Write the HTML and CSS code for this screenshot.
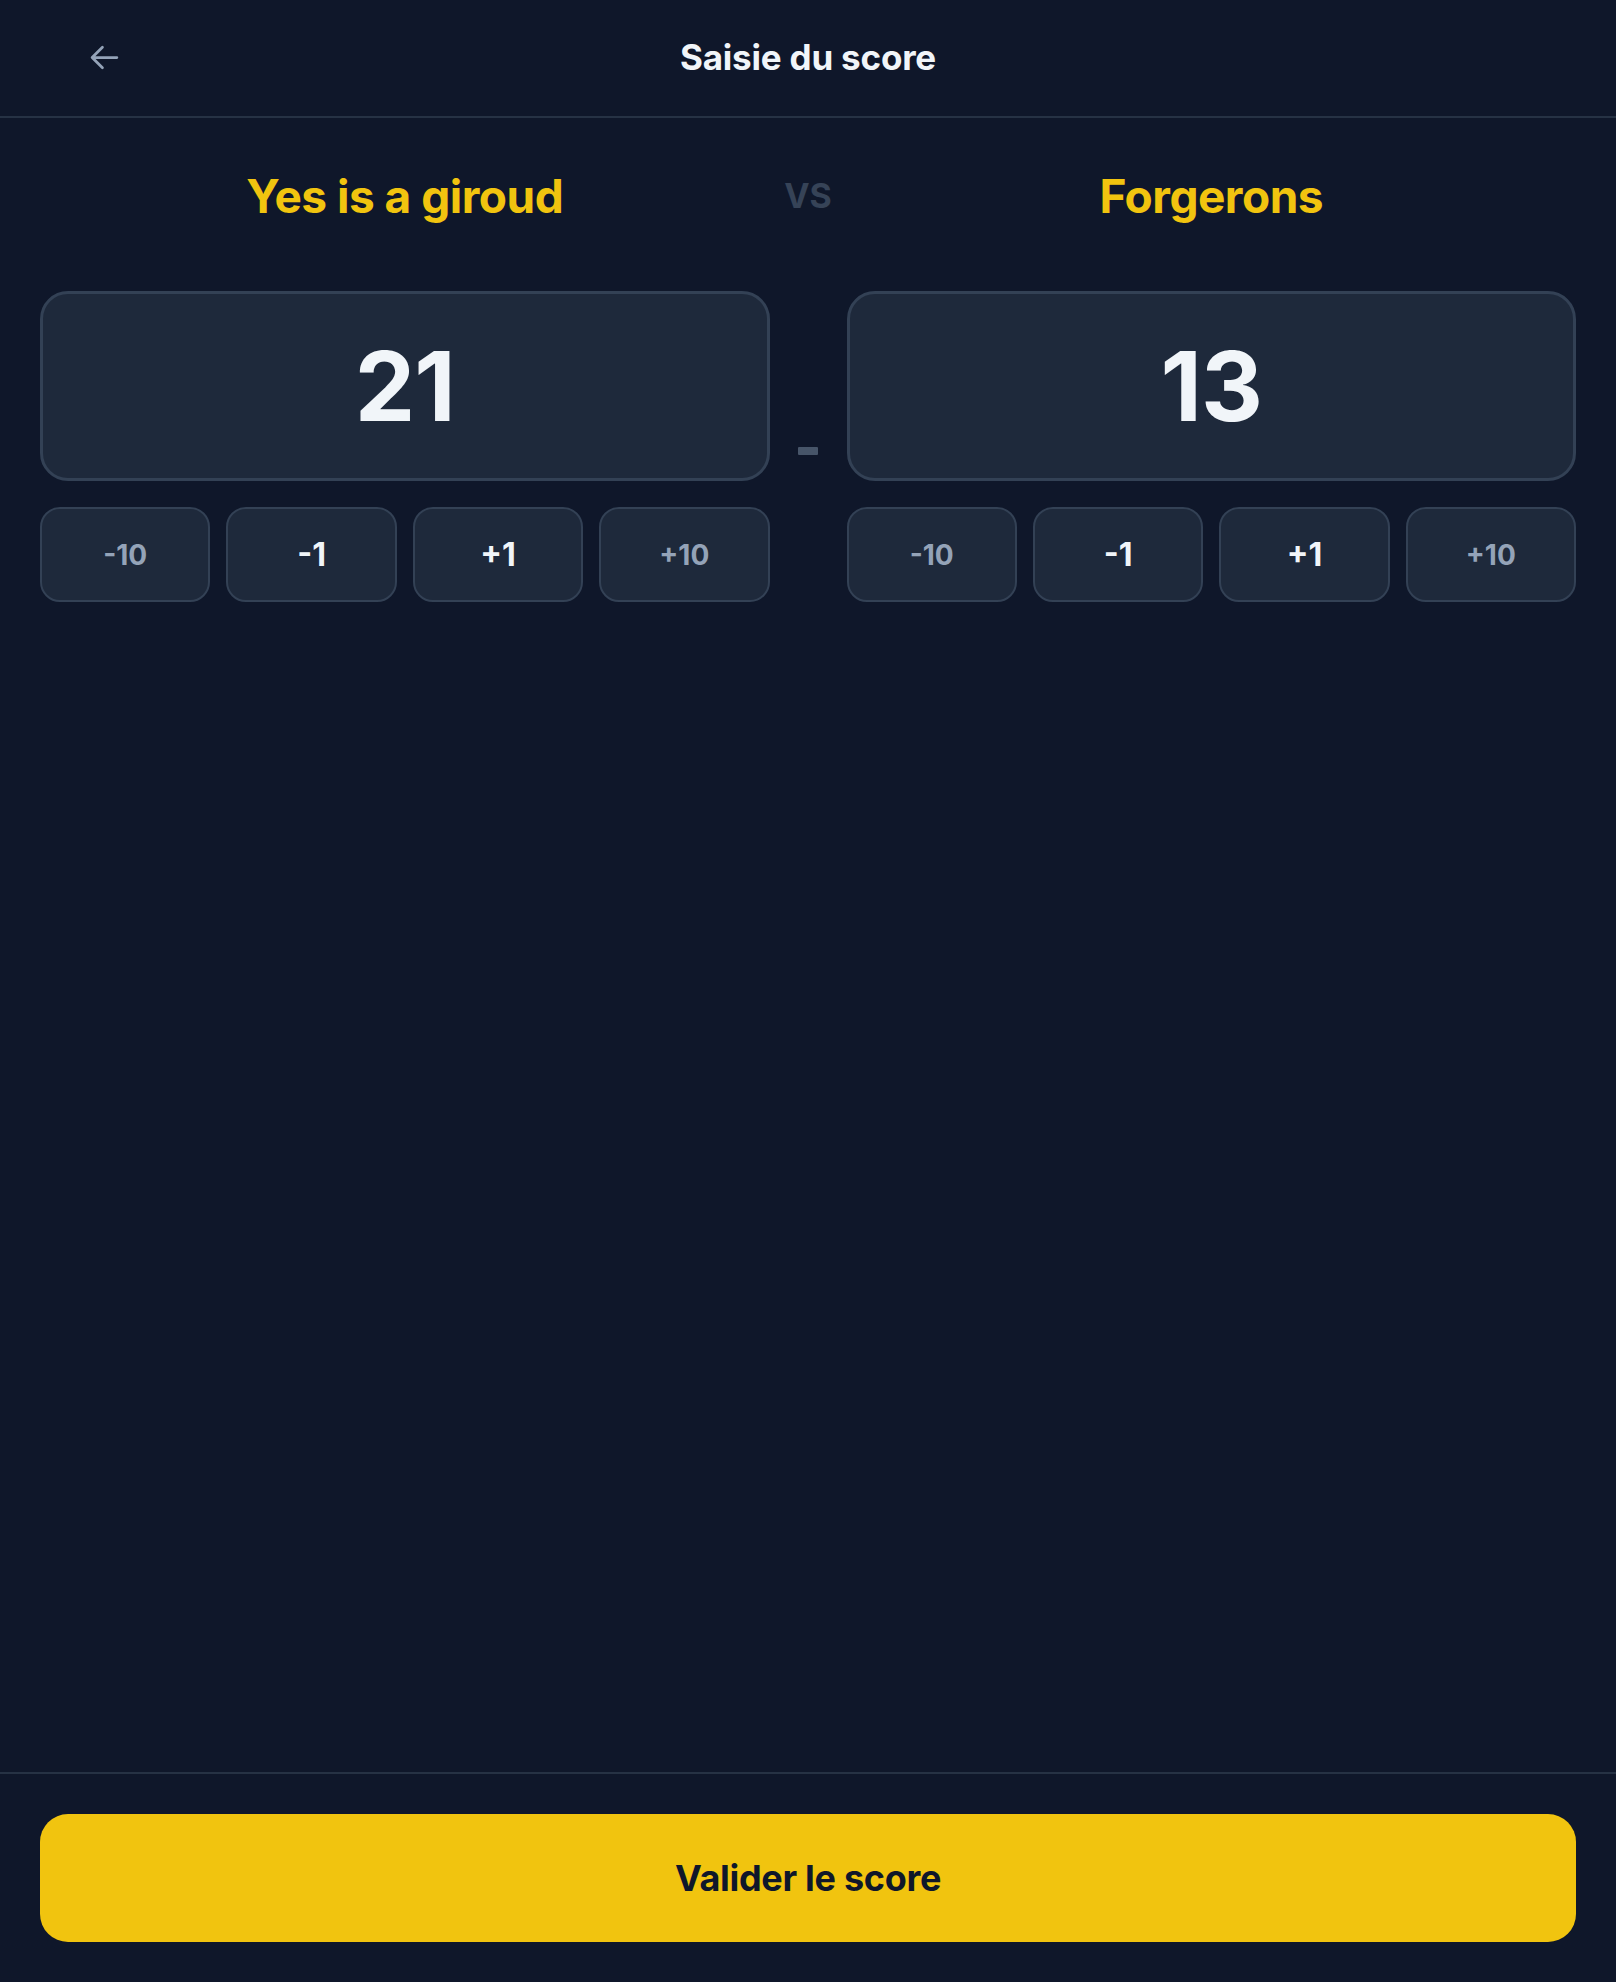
FILE: index.html
```html
<!DOCTYPE html>
<html lang="fr">
<head>
  <meta charset="UTF-8" />
  <meta name="viewport" content="width=device-width, initial-scale=1.0"/>
  <title>Saisie du score</title>
  <link rel="stylesheet" href="styles.css">
</head>
<body>

  <!-- Header -->
  <header class="topbar">
    <button class="back-btn" aria-label="Retour">
      <svg width="33" height="33" viewBox="0 0 24 24" fill="none" stroke="currentColor" stroke-width="2" stroke-linecap="round" stroke-linejoin="round">
        <path d="M10.5 19.5 3 12m0 0 7.5-7.5M3 12h18"/>
      </svg>
    </button>
    <h1 class="title">Saisie du score</h1>
    <span></span>
  </header>

  <!-- Score entry -->
  <main class="match">
    <h2 class="team-name team-a">Yes is a giroud</h2>
    <span class="vs">VS</span>
    <h2 class="team-name team-b">Forgerons</h2>

    <div class="score-box team-a" id="scoreA">21</div>
    <span class="dash"></span>
    <div class="score-box team-b" id="scoreB">13</div>

    <div class="steps team-a">
      <button class="step step-big" data-team="A" data-delta="-10">-10</button>
      <button class="step" data-team="A" data-delta="-1">-1</button>
      <button class="step" data-team="A" data-delta="1">+1</button>
      <button class="step step-big" data-team="A" data-delta="10">+10</button>
    </div>
    <div class="steps team-b">
      <button class="step step-big" data-team="B" data-delta="-10">-10</button>
      <button class="step" data-team="B" data-delta="-1">-1</button>
      <button class="step" data-team="B" data-delta="1">+1</button>
      <button class="step step-big" data-team="B" data-delta="10">+10</button>
    </div>
  </main>

  <!-- Footer -->
  <footer class="bottombar">
    <button class="submit-btn">Valider le score</button>
  </footer>

  <script>
    // Score steps
    document.querySelectorAll('.step').forEach(btn => {
      btn.addEventListener('click', () => {
        const box = document.getElementById('score' + btn.dataset.team);
        const value = Math.max(0, parseInt(box.textContent, 10) + parseInt(btn.dataset.delta, 10));
        box.textContent = value;
      });
    });
  </script>

</body>
</html>
```

FILE: styles.css
```css
* {
  box-sizing: border-box;
}

body {
  margin: 0;
  min-height: 100vh;
  display: flex;
  flex-direction: column;
  font-family: Inter, 'Noto Sans', sans-serif;
  background: #0f172a;
  color: #f1f5f9;
}

button {
  font-family: inherit;
  cursor: pointer;
}

/* Header */
.topbar {
  height: 118px;
  padding: 0 88px;
  display: grid;
  grid-template-columns: 1fr auto 1fr;
  align-items: center;
  border-bottom: 2px solid #263244;
}

.back-btn {
  justify-self: start;
  padding: 0;
  border: none;
  background: none;
  color: #94a3b8;
  display: flex;
  margin-bottom: 2px;
}

.title {
  margin: 0 0 2px;
  font-size: 35px;
  font-weight: 700;
  letter-spacing: -0.2px;
  color: #f1f5f9;
}

/* Match */
.match {
  flex: 1;
  padding: 50px 40px 0;
  display: grid;
  grid-template-columns: 1fr 77px 1fr;
  align-content: start;
}

.team-a {
  grid-column: 1;
}

.team-b {
  grid-column: 3;
}

.team-name {
  grid-row: 1;
  margin: 0 0 67px;
  text-align: center;
  font-size: 46px;
  font-weight: 700;
  letter-spacing: -0.5px;
  line-height: 56px;
  color: #f1c40f;
}

.vs {
  grid-row: 1;
  grid-column: 2;
  align-self: start;
  text-align: center;
  font-size: 34px;
  font-weight: 700;
  line-height: 56px;
  color: #364357;
}

.score-box {
  grid-row: 2;
  height: 190px;
  display: flex;
  align-items: center;
  justify-content: center;
  background: #1e293b;
  border: 3px solid #334155;
  border-radius: 28px;
  font-size: 96px;
  font-weight: 700;
  letter-spacing: -1px;
  color: #f1f5f9;
}

.dash {
  grid-row: 2;
  grid-column: 2;
  align-self: end;
  justify-self: center;
  width: 20px;
  height: 8px;
  margin-bottom: 26px;
  background: #475569;
  border-radius: 1px;
}

.steps {
  grid-row: 3;
  margin-top: 26px;
  display: grid;
  grid-template-columns: repeat(4, 1fr);
  gap: 16px;
}

.step {
  height: 95px;
  background: #1e293b;
  border: 2px solid #334155;
  border-radius: 20px;
  font-size: 32px;
  font-weight: 700;
  color: #f1f5f9;
}

.step-big {
  font-size: 28px;
  font-weight: 700;
  color: #94a3b8;
}

/* Footer */
.bottombar {
  padding: 40px;
  border-top: 2px solid #263244;
}

.submit-btn {
  width: 100%;
  height: 128px;
  border: none;
  border-radius: 28px;
  background: #f1c40f;
  font-size: 36px;
  font-weight: 700;
  letter-spacing: -0.3px;
  color: #0f172a;
}
```
